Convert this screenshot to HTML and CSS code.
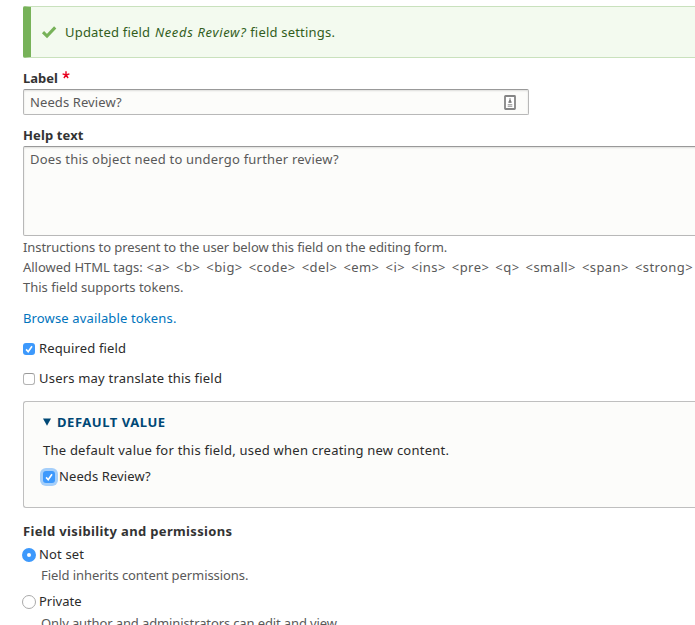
FILE: index.html
```html
<!DOCTYPE html>
<html lang="en">
<head>
<meta charset="utf-8">
<title>Field settings</title>
<link rel="stylesheet" href="styles.css">
</head>
<body>
<main class="page">
  <div class="message">
    <svg class="check-icon" viewBox="0 0 16 14"><path d="M2 7.2 L6 11 L14.2 2.4" fill="none" stroke="#77b259" stroke-width="3.1"/></svg>
    <span class="t-message">Updated field <em>Needs Review?</em> field settings.</span>
  </div>
  <form class="form">
    <div class="line heading label-row"><span class="t-label">Label</span><svg class="required" viewBox="0 0 8 8"><path d="M4 0.3V4L0.6 2.9M4 4L7.4 2.9M4 4L1.9 7M4 4L6.1 7" fill="none" stroke="#e8001f" stroke-width="1.4"/></svg></div>
    <div class="input">
      <span class="t-needs">Needs Review?</span>
      <svg class="card-icon" viewBox="0 0 12 15"><rect x="1" y="1" width="10" height="13" rx="0.5" fill="#fff" stroke="#858585" stroke-width="1.8"/><path d="M6 3.2V6M4.7 7.3H7.3L6 5.2Z" fill="#777" stroke="#777" stroke-width="1"/><path d="M3.7 9.6H8.3M3.7 11.3H8.3" stroke="#aaa" stroke-width="1.2"/></svg>
    </div>
    <div class="line heading help-label"><span class="t-help">Help text</span></div>
    <div class="textarea"><span class="t-does">Does this object need to undergo further review?</span></div>
    <div class="description">
      <div class="line"><span class="t-instructions">Instructions to present to the user below this field on the editing form.</span></div>
      <div class="line"><span class="t-allowed">Allowed HTML tags: <span class="tags">&lt;a&gt; &lt;b&gt; &lt;big&gt; &lt;code&gt; &lt;del&gt; &lt;em&gt; &lt;i&gt; &lt;ins&gt; &lt;pre&gt; &lt;q&gt; &lt;small&gt; &lt;span&gt; &lt;strong&gt;</span></span></div>
      <div class="line"><span class="t-supports">This field supports tokens.</span></div>
    </div>
    <div class="line browse"><a class="t-browse">Browse available tokens.</a></div>
    <div class="line option"><span class="box checked"><svg viewBox="0 0 12 12"><path d="M3.1 6.4L5.2 8.7L9 3.3" fill="none" stroke="#fff" stroke-width="1.6"/></svg></span><span class="t-required">Required field</span></div>
    <div class="line option translate"><span class="box"></span><span class="t-users">Users may translate this field</span></div>
    <section class="details">
      <div class="line summary"><svg class="arrow" viewBox="0 0 8 8"><path d="M0 0.5H8L4 7.8Z" fill="#004875"/></svg><span class="t-default">DEFAULT VALUE</span></div>
      <div class="line details-text"><span class="t-thedefault">The default value for this field, used when creating new content.</span></div>
      <div class="line option focused"><span class="box checked"><svg viewBox="0 0 12 12"><path d="M3.1 6.4L5.2 8.7L9 3.3" fill="none" stroke="#fff" stroke-width="1.6"/></svg></span><span class="t-needs">Needs Review?</span></div>
    </section>
    <div class="line heading"><span class="t-visibility">Field visibility and permissions</span></div>
    <div class="line option radio-option"><span class="radio selected"></span><span class="t-notset">Not set</span></div>
    <div class="line radio-help"><span class="t-inherits">Field inherits content permissions.</span></div>
    <div class="line option radio-option private"><span class="radio"></span><span class="t-private">Private</span></div>
    <div class="line radio-help last"><span class="t-only">Only author and administrators can edit and view.</span></div>
  </form>
</main>
</body>
</html>
```
FILE: styles.css
```css
* { box-sizing: border-box; }
html, body { margin: 0; height: 625px; overflow: hidden; background: #fff; }
body { font: 13px/20px "Noto Sans", "Open Sans", sans-serif; color: #2b2b2b; }
.page { padding: 6px 0 0 23px; width: 100%; white-space: nowrap; }
.line { height: 20px; display: flex; align-items: center; }
.message { height: 52px; display: flex; align-items: center; padding-left: 10px; background: #f3faef; border: 1px solid #c9e1bd; border-left: 8px solid #77b259; border-right: 0; border-radius: 2px 0 0 2px; color: #325e1c; }
.check-icon { width: 16px; height: 14px; margin-right: 8px; }
.heading { font-weight: 700; color: #333; }
.label-row { margin-top: 10px; }
.required { width: 8px; height: 8px; margin: -7px 0 0 4px; }
.input { width: 506px; height: 26px; margin-top: 1px; padding: 0 12px 0 6px; display: flex; align-items: center; justify-content: space-between; }
.input, .textarea { background: #fcfcfa; border: 1px solid #b8b8b8; border-top-color: #999; border-radius: 2px; box-shadow: inset 0 1px 2px rgba(0,0,0,.125); color: #595959; }
.card-icon { width: 12px; height: 15px; }
.help-label { margin-top: 10px; }
.textarea { height: 90px; margin: 1px -4px 0 0; padding: 2px 6px; }
.description { margin-top: 1px; color: #595959; }
.browse { margin-top: 11px; margin-bottom: 10px; color: #0074bd; }
.box { width: 12px; height: 12px; margin: 1px 4px 0 0; border: 1px solid #b4b4b4; border-top-color: #999; border-radius: 3px; background: #fff; flex: none; }
.box svg { display: block; width: 12px; height: 12px; }
.box.checked { border: 0; background: #3d99fc; }
.translate { margin-top: 10px; }
.details { height: 107px; margin: 13px 0 13px; padding: 10px 0 0 19px; background: #fcfcfa; border: 1px solid #bfbfbf; border-right: 0; border-radius: 3px 0 0 3px; }
.summary { font-weight: 700; color: #004875; }
.arrow { width: 8px; height: 8px; margin-right: 6px; }
.details-text { margin-top: 8px; }
.focused { margin-top: 6px; }
.focused .box { box-shadow: 0 0 0 3px #a5cffa; }
.radio-option { margin-left: -1px; margin-top: 3px; }
.radio { width: 14px; height: 14px; margin: 1px 3px 0 0; border: 1px solid #aaa; border-radius: 50%; background: #fff; flex: none; }
.radio.selected { border: 5px solid #3d99fc; }
.radio-help { margin-top: 1px; padding-left: 18px; color: #595959; }
.private { margin-top: 6px; }
.last { margin-top: 2px; }

/* Tracking per text */
.t-message { letter-spacing: .2px; }
.t-message em { letter-spacing: .65px; margin-left: 1px; }
.t-needs { letter-spacing: .1px; }
.t-help { letter-spacing: .12px; }
.t-does { letter-spacing: .21px; }
.t-instructions { letter-spacing: -.08px; }
.t-allowed { letter-spacing: -.02px; }
.tags { letter-spacing: .42px; word-spacing: 2.3px; margin-left: .5px; }
.t-browse { letter-spacing: .14px; }
.t-required { letter-spacing: .14px; }
.t-users { letter-spacing: .2px; }
.t-default { letter-spacing: .54px; }
.t-thedefault { letter-spacing: .23px; }
.t-visibility { letter-spacing: .34px; }
.t-notset { letter-spacing: .15px; }
.t-inherits { letter-spacing: -.07px; }
.t-only { letter-spacing: -.12px; }
```
